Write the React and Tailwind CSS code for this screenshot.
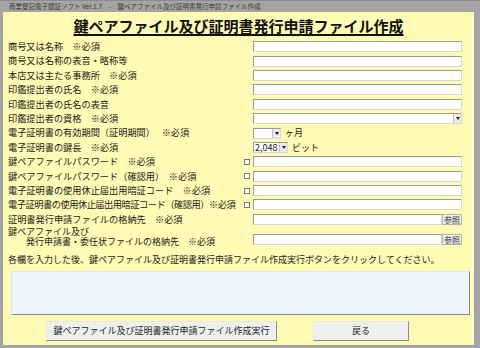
import React from "react";

const font = { fontFamily: '"Noto Sans CJK JP", "Noto Sans", sans-serif' };

function TextBox({ className = "" }) {
  return (
    <div
      className={
        "h-[11px] bg-white border border-t-[#9a9a9a] border-l-[#9a9a9a] border-r-[#d8d8d8] border-b-[#d8d8d8] " +
        className
      }
    />
  );
}

function Arrow() {
  return (
    <div className="w-[8px] h-full bg-[#ececec] border-l border-[#c4c4c4] flex items-center justify-center">
      <div className="w-0 h-0 border-l-[2px] border-r-[2px] border-t-[3px] border-l-transparent border-r-transparent border-t-[#202020]" />
    </div>
  );
}

function Select({ className = "", value = "" }) {
  return (
    <div
      className={
        "h-[11px] bg-white border border-t-[#9a9a9a] border-l-[#9a9a9a] border-r-[#d8d8d8] border-b-[#d8d8d8] flex items-stretch " +
        className
      }
    >
      <div className="flex-1 text-[9px] leading-[9px] pl-[1px] text-[#222]">{value}</div>
      <Arrow />
    </div>
  );
}

function Check() {
  return <div className="w-[6px] h-[6px] bg-white border border-[#7a7a7a]" />;
}

function Browse() {
  return (
    <div className="flex items-center w-full">
      <TextBox className="flex-1" />
      <div className="h-[11px] w-[20px] bg-[#f0f0f0] border border-[#b4b4b4] text-[8px] leading-[9px] text-center text-[#333]">
        参照
      </div>
    </div>
  );
}

const rows = [
  { label: "商号又は名称　※必須", ctrl: "text" },
  { label: "商号又は名称の表音・略称等", ctrl: "text" },
  { label: "本店又は主たる事務所　※必須", ctrl: "text" },
  { label: "印鑑提出者の氏名　※必須", ctrl: "text" },
  { label: "印鑑提出者の氏名の表音", ctrl: "text" },
  { label: "印鑑提出者の資格　※必須", ctrl: "select" },
  { label: "電子証明書の有効期間（証明期間）　 ※必須", ctrl: "months" },
  { label: "電子証明書の鍵長　※必須", ctrl: "bits" },
  { label: "鍵ペアファイルパスワード　※必須", ctrl: "text", check: true },
  { label: "鍵ペアファイルパスワード（確認用）　※必須", ctrl: "text", check: true },
  { label: "電子証明書の使用休止届出用暗証コード　※必須", ctrl: "text", check: true },
  { label: "電子証明書の使用休止届出用暗証コード（確認用）※必須", ctrl: "text", check: true, tight: true },
  { label: "証明書発行申請ファイルの格納先　※必須", ctrl: "browse" },
];

function Control({ type }) {
  if (type === "select") return <Select className="w-full" />;
  if (type === "months")
    return (
      <div className="flex items-center">
        <Select className="w-[28px]" />
        <span className="ml-[4px] text-[9px] text-[#222]">ヶ月</span>
      </div>
    );
  if (type === "bits")
    return (
      <div className="flex items-center">
        <Select className="w-[35px]" value="2,048" />
        <span className="ml-[4px] text-[9px] text-[#222]">ビット</span>
      </div>
    );
  if (type === "browse") return <Browse />;
  return <TextBox className="w-full" />;
}

export default function App() {
  return (
    <div
      className="w-[480px] h-[348px] bg-[#a4a4a4] flex flex-col overflow-hidden"
      style={font}
    >
      <div className="h-[12px] flex items-center pl-[9px] text-[6.5px] leading-none text-[#3a3a3a] border-t border-[#8c8c8c]">
        商業登記電子認証ソフト Ver.1.7　-　鍵ペアファイル及び証明書発行申請ファイル作成
      </div>
      <div className="flex-1 ml-[3px] mr-[6px] mb-[3px] bg-[#fffab4] border-r border-[#fffde0] flex flex-col pl-[5px]">
        <div className="h-[27.5px] flex items-center justify-center pr-[4px]">
          <span className="text-[15px] font-bold leading-none underline underline-offset-[2px] decoration-[1.5px] text-[#111]">
            鍵ペアファイル及び証明書発行申請ファイル作成
          </span>
        </div>

        {rows.map((r, i) => (
          <div key={i} className="h-[14.4px] flex items-center">
            <div
              className={
                "w-[236px] text-[9.2px] leading-none text-[#222] whitespace-nowrap " +
                (r.tight ? "tracking-[-0.45px]" : "")
              }
            >
              {r.label}
            </div>
            <div className="w-[9px] flex items-center">{r.check && <Check />}</div>
            <div className="w-[209px]">
              <Control type={r.ctrl} />
            </div>
          </div>
        ))}

        <div className="h-[21px] flex">
          <div className="w-[236px] text-[9px] leading-[10.5px] text-[#222] whitespace-pre">
            {"鍵ペアファイル及び\n　　発行申請書・委任状ファイルの格納先　※必須"}
          </div>
          <div className="w-[9px]" />
          <div className="w-[209px] self-end mb-[3px]">
            <Browse />
          </div>
        </div>

        <div className="mt-[7px] h-[10px] text-[9px] leading-[10px] text-[#222] whitespace-nowrap">
          各欄を入力した後、鍵ペアファイル及び証明書発行申請ファイル作成実行ボタンをクリックしてください。
        </div>

        <div className="ml-[3px] mt-[6px] w-[459px] h-[44px] bg-[#eef5ff] border border-t-[#e0e6ee] border-l-[#e0e6ee] border-r-[#8a8a8a] border-b-[#8a8a8a]" />

        <div className="flex mt-[6px]">
          <div className="ml-[38px] w-[231px] h-[20px] bg-[#efefef] border border-t-[#e6e6e6] border-l-[#e6e6e6] border-r-[#8c8c8c] border-b-[#8c8c8c] flex items-center justify-center text-[9px] text-[#222]">
            鍵ペアファイル及び証明書発行申請ファイル作成実行
          </div>
          <div className="ml-[36px] w-[96px] h-[20px] bg-[#efefef] border border-t-[#e6e6e6] border-l-[#e6e6e6] border-r-[#8c8c8c] border-b-[#8c8c8c] flex items-center justify-center text-[9px] text-[#222]">
            戻る
          </div>
        </div>
      </div>
    </div>
  );
}
